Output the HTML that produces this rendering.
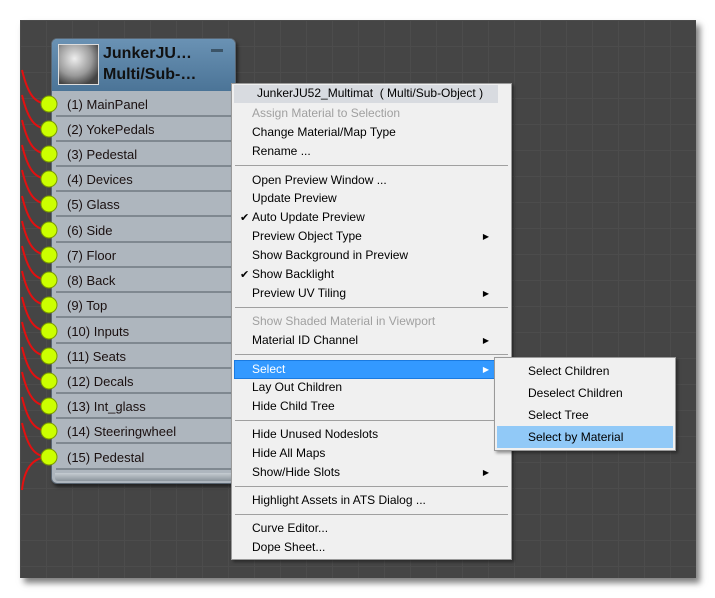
<!DOCTYPE html>
<html><head><style>
*{margin:0;padding:0;box-sizing:border-box}
body{width:715px;height:598px;background:#fff;position:relative;overflow:hidden;font-family:"Liberation Sans",sans-serif}
.canvas{position:absolute;left:20px;top:20px;width:676px;height:558px;background-color:#454545;
background-image:linear-gradient(#4c4c4c 1px,transparent 1px),linear-gradient(90deg,#4c4c4c 1px,transparent 1px);background-size:26px 26px;box-shadow:4px 5px 6px rgba(0,0,0,.5)}
.node{position:absolute;left:51px;top:38px;width:185px;height:446px;background:#aeb6be;border-radius:6px;border:1px solid #5a6672;box-shadow:2px 3px 3px rgba(0,0,0,.5);overflow:hidden}
.hdr{height:52px;background:linear-gradient(#6a92b4,#4b7497);position:relative}
.thumb{position:absolute;left:6px;top:5px;width:41px;height:41px;background:radial-gradient(circle at 40% 35%,#eee,#999 50%,#444 80%);border:1px solid #ddd}
.t1,.t2{position:absolute;left:51px;font-weight:bold;font-size:16px;color:#111}
.t1{top:6px}.t2{top:27px}
.dash{position:absolute;right:12px;top:10px;width:12px;height:3px;background:#3b5468}
.row{position:absolute;left:4px;width:182px;height:25px;border-bottom:2px solid #7f8890;font-size:13px;color:#1a1010;padding:5px 0 0 11px}
.foot{position:absolute;left:3px;top:434px;width:180px;height:8px;background:linear-gradient(#c6ccd2,#8b949c);border-radius:0 0 3px 3px}
.menu{position:absolute;left:231px;top:83px;width:281px;height:477px;background:#f0f0f0;border:1px solid #999;font-size:12px;color:#000;box-shadow:2px 2px 3px rgba(0,0,0,.4)}
.it{position:absolute;left:20px;height:19px;line-height:19px}
.sep{position:absolute;left:3px;right:3px;height:1px;background:#a0a0a0}
.g{color:#a0a0a0}
.ar{position:absolute;right:22px;font-size:8px}
.ck{position:absolute;left:8px;font-size:11px}
.sub{position:absolute;left:494px;top:357px;width:182px;height:94px;background:#f0f0f0;border:1px solid #999;font-size:12px;box-shadow:2px 2px 3px rgba(0,0,0,.4)}
.si{position:absolute;left:33px;height:22px;line-height:22px}
</style></head><body>
<div class="canvas"></div>
<svg style="position:absolute;left:0;top:0" width="715" height="598">
<g stroke="#e31010" stroke-width="2" fill="none">
<path d="M22 70 C28 95,35 104,49 104"/><path d="M22 95 C28 120,35 129,49 129"/><path d="M22 120 C28 145,35 154,49 154"/><path d="M22 145 C28 170,35 179,49 179"/><path d="M22 170 C28 195,35 204,49 204"/><path d="M22 196 C28 221,35 230,49 230"/><path d="M22 221 C28 246,35 255,49 255"/><path d="M22 246 C28 271,35 280,49 280"/><path d="M22 271 C28 296,35 305,49 305"/><path d="M22 297 C28 322,35 331,49 331"/><path d="M22 322 C28 347,35 356,49 356"/><path d="M22 347 C28 372,35 381,49 381"/><path d="M22 372 C28 397,35 406,49 406"/><path d="M22 397 C28 422,35 431,49 431"/><path d="M22 423 C28 448,35 457,49 457"/><path d="M22 490 C24 470,32 457,49 457"/>
</g></svg>
<div class="node">
<div class="hdr"><div class="thumb"></div><div class="t1">JunkerJU…</div><div class="t2">Multi/Sub-…</div><div class="dash"></div></div>
<div class="row" style="top:53px">(1) MainPanel</div>
<div class="row" style="top:78px">(2) YokePedals</div>
<div class="row" style="top:103px">(3) Pedestal</div>
<div class="row" style="top:128px">(4) Devices</div>
<div class="row" style="top:153px">(5) Glass</div>
<div class="row" style="top:179px">(6) Side</div>
<div class="row" style="top:204px">(7) Floor</div>
<div class="row" style="top:229px">(8) Back</div>
<div class="row" style="top:254px">(9) Top</div>
<div class="row" style="top:280px">(10) Inputs</div>
<div class="row" style="top:305px">(11) Seats</div>
<div class="row" style="top:330px">(12) Decals</div>
<div class="row" style="top:355px">(13) Int_glass</div>
<div class="row" style="top:380px">(14) Steeringwheel</div>
<div class="row" style="top:406px">(15) Pedestal</div>
<div class="foot"></div>
</div>
<svg style="position:absolute;left:0;top:0" width="715" height="598"><g fill="#ccff00" stroke="#7a9a00" stroke-width="1">
<circle cx="49" cy="104" r="8"/><circle cx="49" cy="129" r="8"/><circle cx="49" cy="154" r="8"/><circle cx="49" cy="179" r="8"/><circle cx="49" cy="204" r="8"/><circle cx="49" cy="230" r="8"/><circle cx="49" cy="255" r="8"/><circle cx="49" cy="280" r="8"/><circle cx="49" cy="305" r="8"/><circle cx="49" cy="331" r="8"/><circle cx="49" cy="356" r="8"/><circle cx="49" cy="381" r="8"/><circle cx="49" cy="406" r="8"/><circle cx="49" cy="431" r="8"/><circle cx="49" cy="457" r="8"/></g></svg>
<div class="menu">
<div style="position:absolute;left:2px;top:1px;width:264px;height:18px;background:#d8dbe0"></div>
<div class="it" style="left:25px;top:0">JunkerJU52_Multimat &nbsp;( Multi/Sub-Object )</div>
<div class="it g" style="top:20px">Assign Material to Selection</div>
<div class="it" style="top:39px">Change Material/Map Type</div>
<div class="it" style="top:58px">Rename ...</div>
<div class="sep" style="top:81px"></div>
<div class="it" style="top:87px">Open Preview Window ...</div>
<div class="it" style="top:105px">Update Preview</div>
<div class="ck" style="top:127px">✔</div><div class="it" style="top:124px">Auto Update Preview</div>
<div class="it" style="top:143px">Preview Object Type</div><div class="ar" style="top:148px">▶</div>
<div class="it" style="top:162px">Show Background in Preview</div>
<div class="ck" style="top:184px">✔</div><div class="it" style="top:181px">Show Backlight</div>
<div class="it" style="top:200px">Preview UV Tiling</div><div class="ar" style="top:205px">▶</div>
<div class="sep" style="top:223px"></div>
<div class="it g" style="top:228px">Show Shaded Material in Viewport</div>
<div class="it" style="top:247px">Material ID Channel</div><div class="ar" style="top:252px">▶</div>
<div class="sep" style="top:270px"></div>
<div style="position:absolute;left:2px;top:276px;width:263px;height:19px;background:#3399ff;border:1px solid #1a7ae0"></div>
<div class="it" style="top:276px;color:#fff">Select</div><div class="ar" style="top:281px;color:#fff">▶</div>
<div class="it" style="top:294px">Lay Out Children</div>
<div class="it" style="top:313px">Hide Child Tree</div>
<div class="sep" style="top:336px"></div>
<div class="it" style="top:341px">Hide Unused Nodeslots</div>
<div class="it" style="top:360px">Hide All Maps</div>
<div class="it" style="top:379px">Show/Hide Slots</div><div class="ar" style="top:384px">▶</div>
<div class="sep" style="top:402px"></div>
<div class="it" style="top:407px">Highlight Assets in ATS Dialog ...</div>
<div class="sep" style="top:430px"></div>
<div class="it" style="top:435px">Curve Editor...</div>
<div class="it" style="top:454px">Dope Sheet...</div>
</div>
<div class="sub">
<div class="si" style="top:2px">Select Children</div>
<div class="si" style="top:24px">Deselect Children</div>
<div class="si" style="top:46px">Select Tree</div>
<div style="position:absolute;left:2px;top:68px;width:176px;height:22px;background:#91c9f7"></div>
<div class="si" style="top:68px">Select by Material</div>
</div>
</body></html>
